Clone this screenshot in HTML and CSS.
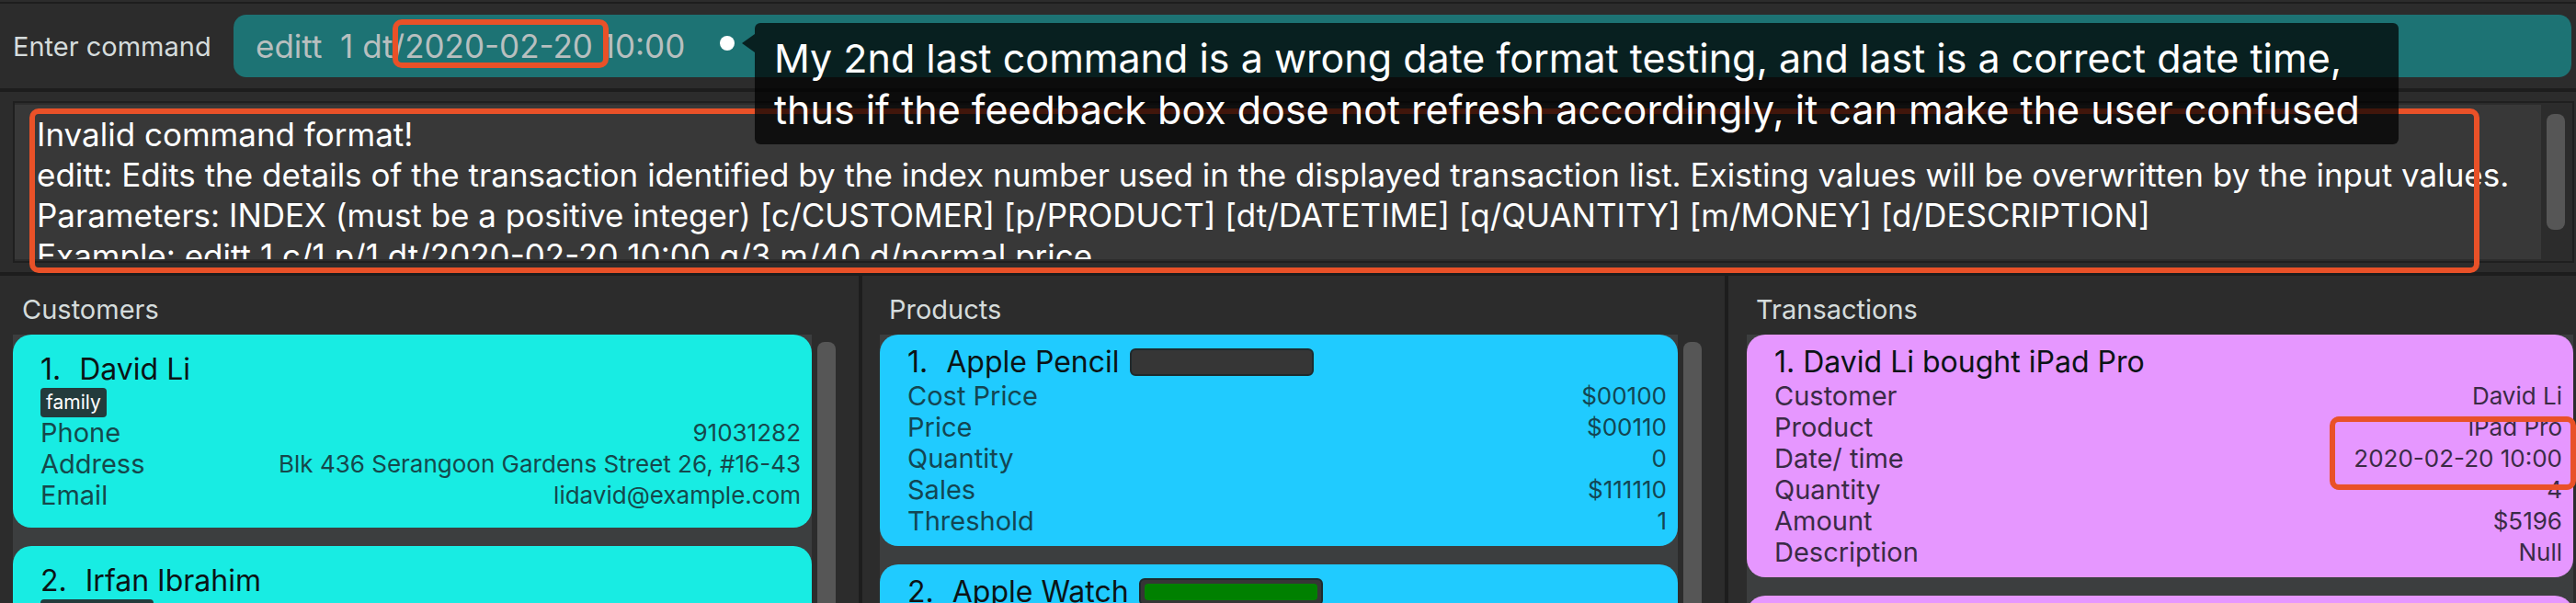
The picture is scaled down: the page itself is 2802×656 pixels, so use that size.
FILE: index.html
```html
<!DOCTYPE html>
<html lang="en">
<head>
<meta charset="utf-8">
<title>Command window</title>
<link rel="stylesheet" href="styles.css">
</head>
<body>
<div class="app">
  <form class="command-bar">
    <label class="command-label" for="command">Enter command</label>
    <input class="command-input" id="command" type="text" value="editt  1 dt/2020-02-20 10:00">
    <span class="mark mark-command"></span>
    <span class="callout-dot"></span>
    <p class="callout">My 2nd last command is a wrong date format testing, and last is a correct date time,<br>thus if the feedback box dose not refresh accordingly, it can make the user confused</p>
  </form>

  <section class="feedback">
    <div class="feedback-frame">
      <textarea class="feedback-text" aria-label="Feedback" readonly>Invalid command format!
editt: Edits the details of the transaction identified by the index number used in the displayed transaction list. Existing values will be overwritten by the input values.
Parameters: INDEX (must be a positive integer) [c/CUSTOMER] [p/PRODUCT] [dt/DATETIME] [q/QUANTITY] [m/MONEY] [d/DESCRIPTION]
Example: editt 1 c/1 p/1 dt/2020-02-20 10:00 q/3 m/40 d/normal price</textarea>
      <div class="feedback-scroll"><span class="feedback-thumb"></span></div>
    </div>
    <span class="mark mark-feedback"></span>
  </section>

  <main class="columns">
    <section class="column">
      <h2 class="column-title">Customers</h2>
      <div class="list">
        <div class="cells">
          <article class="card customer">
            <h3 class="card-title"><span>1.</span><span>David Li</span></h3>
            <span class="tag">family</span>
            <dl class="facts">
              <dt>Phone</dt><dd>91031282</dd>
              <dt>Address</dt><dd>Blk 436 Serangoon Gardens Street 26, #16-43</dd>
              <dt>Email</dt><dd>lidavid@example.com</dd>
            </dl>
          </article>
          <article class="card customer">
            <h3 class="card-title"><span>2.</span><span>Irfan Ibrahim</span></h3>
            <span class="tag">classmates</span>
          </article>
        </div>
        <span class="list-thumb"></span>
      </div>
    </section>

    <section class="column">
      <h2 class="column-title">Products</h2>
      <div class="list">
        <div class="cells">
          <article class="card product">
            <h3 class="card-title"><span>1.</span><span>Apple Pencil</span><progress class="stock" value="0" max="100" aria-label="Stock of Apple Pencil"></progress></h3>
            <dl class="facts">
              <dt>Cost Price</dt><dd>$00100</dd>
              <dt>Price</dt><dd>$00110</dd>
              <dt>Quantity</dt><dd>0</dd>
              <dt>Sales</dt><dd>$111110</dd>
              <dt>Threshold</dt><dd>1</dd>
            </dl>
          </article>
          <article class="card product">
            <h3 class="card-title"><span>2.</span><span>Apple Watch</span><progress class="stock" value="100" max="100" aria-label="Stock of Apple Watch"></progress></h3>
          </article>
        </div>
        <span class="list-thumb"></span>
      </div>
    </section>

    <section class="column column-last">
      <h2 class="column-title">Transactions</h2>
      <div class="list">
        <div class="cells">
          <article class="card transaction">
            <h3 class="card-title">1. David Li bought iPad Pro</h3>
            <dl class="facts">
              <dt>Customer</dt><dd>David Li</dd>
              <dt>Product</dt><dd>iPad Pro</dd>
              <dt>Date/ time</dt><dd>2020-02-20 10:00</dd>
              <dt>Quantity</dt><dd>4</dd>
              <dt>Amount</dt><dd>$5196</dd>
              <dt>Description</dt><dd>Null</dd>
            </dl>
            <span class="mark mark-date"></span>
          </article>
          <article class="card transaction"></article>
        </div>
      </div>
    </section>
  </main>
</div>
</body>
</html>
```

FILE: styles.css
```css
* { box-sizing: border-box; }

body {
  margin: 0;
  background: #2c2c2c;
  color: #d5dcdc;
  font-family: Inter, "Liberation Sans", sans-serif;
}

.app {
  display: flex;
  flex-direction: column;
  height: 100vh;
  overflow: hidden;
  padding-top: 2px;
}

/* Command bar */
.command-bar {
  position: relative;
  z-index: 2;
  display: flex;
  align-items: center;
  gap: 23px;
  padding: 12px 5px 12px 14px;
  border-top: 2px solid #1d1d1d;
  border-bottom: 4px solid #1d1d1d;
}

.command-label { flex: none; width: 217px; padding-top: 2px; font-size: 29px; line-height: 36px; }

.command-input {
  flex: 1;
  min-width: 0;
  height: 68px;
  padding: 0 24px;
  border: 0;
  border-radius: 14px;
  outline: 0;
  background: #1d7374;
  color: #b8bfbf;
  font: 35px/40px Inter, "Liberation Sans", sans-serif;
}

.callout-dot {
  position: absolute;
  top: 35px;
  left: 783px;
  width: 16px;
  height: 16px;
  border-radius: 50%;
  background: #fff;
}

.callout {
  position: absolute;
  top: 21px;
  left: 821px;
  margin: 0;
  padding: 10px 42px 10px 21px;
  border-radius: 6px;
  background: rgba(0, 0, 0, .72);
  color: #fff;
  font-size: 43px;
  line-height: 56px;
  white-space: nowrap;
}

.callout::before {
  content: "";
  position: absolute;
  top: 12px;
  left: -14px;
  border: solid transparent;
  border-width: 10px 14px 10px 0;
  border-right-color: rgba(0, 0, 0, .72);
}

.mark {
  position: absolute;
  border: 6px solid #e95128;
  border-radius: 10px;
  pointer-events: none;
}

.mark-command { top: 17px; left: 427px; width: 235px; height: 53px; }
.mark-feedback { top: 18px; right: 105px; bottom: -1px; left: 32px; }
.mark-date { top: 89px; right: -3px; width: 268px; height: 80px; }

/* Feedback */
.feedback {
  position: relative;
  z-index: 1;
  padding: 10px 2px 10px 14px;
  border-bottom: 4px solid #1d1d1d;
}

.feedback-frame {
  display: flex;
  border: 2px solid #1f1f1f;
  padding: 2px 0;
}

.feedback-text {
  flex: 1;
  height: 168px;
  padding: 10px 0 0 24px;
  border: 0;
  outline: 0;
  resize: none;
  overflow: hidden;
  background: #383838;
  color: #fff;
  font: 35px/44px Inter, "Liberation Sans", sans-serif;
  white-space: pre;
}

.feedback-scroll { width: 34px; padding: 10px 8px 0 6px; }
.feedback-thumb { display: block; height: 126px; border-radius: 8px; background: #565656; }

/* Columns */
.columns {
  flex: 1;
  min-height: 0;
  display: grid;
  grid-template-columns: 938fr 942fr 922fr;
}

.column {
  display: flex;
  flex-direction: column;
  min-width: 0;
  min-height: 0;
  padding: 18px 25px 0 14px;
  border-right: 4px solid #1d1d1d;
}

.column + .column { padding-left: 19px; }
.column + .column-last { padding-right: 3px; padding-left: 20px; border-right: 0; }

.column-title {
  margin: 0 0 8px 10px;
  font-size: 29px;
  font-weight: 400;
  line-height: 38px;
}

.list { flex: 1; min-height: 0; display: flex; gap: 6px; }

.cells {
  flex: 1;
  min-width: 0;
  display: flex;
  flex-direction: column;
  gap: 20px;
  background: #3c3e3f;
}

.list-thumb { width: 20px; margin-top: 8px; border-radius: 8px 8px 0 0; background: #565656; }

.card {
  position: relative;
  flex: none;
  padding: 10px 12px 10px 30px;
  border-radius: 20px;
  color: #1a3c44;
}

.customer { min-height: 210px; padding-top: 18px; background: #18ece3; color: #15484c; }
.product { min-height: 230px; background: #20cbff; color: #134653; }
.transaction { min-height: 264px; background: #e697ff; color: #3a2b46; }

.card-title {
  display: flex;
  align-items: center;
  gap: 20px;
  margin: 0;
  color: #0b1416;
  font-size: 32px;
  font-weight: 400;
  line-height: 40px;
}

.stock {
  appearance: none;
  width: 200px;
  height: 30px;
  margin-left: -9px;
  padding: 4px;
  border: 2px solid #1d2a2e;
  border-radius: 6px;
  background: #363636;
}

.stock::-webkit-progress-bar { background: transparent; }
.stock::-webkit-progress-value { border-radius: 4px; background: #008000; }

.tag {
  display: block;
  width: fit-content;
  padding: 0 6px;
  border-radius: 4px;
  background: #233b3c;
  color: #fff;
  font-size: 21px;
  line-height: 32px;
}

.facts {
  display: grid;
  grid-template-columns: auto 1fr;
  margin: 0;
  font-size: 29px;
  line-height: 34px;
}

.facts dd { margin: 0; font-size: 26px; text-align: right; }
```
